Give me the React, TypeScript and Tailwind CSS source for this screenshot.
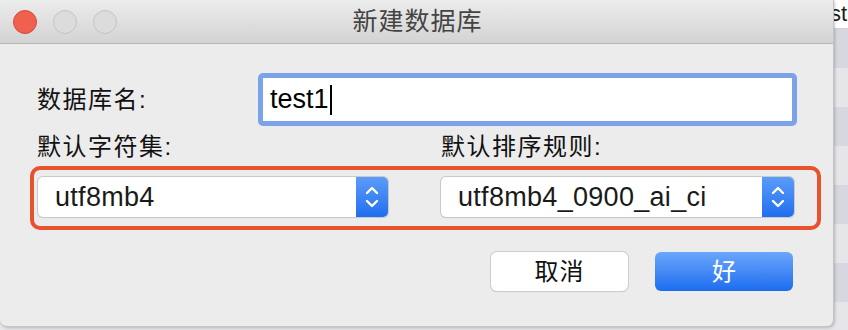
import React from 'react';

const font = { fontFamily: '"Liberation Sans", "Noto Sans CJK SC", sans-serif' };

const Stepper = () => (
  <div className="w-[32px] h-full rounded-r-[5px] bg-gradient-to-b from-[#5b9bf9] to-[#1f6ef0] flex items-center justify-center">
    <svg width="16" height="26" viewBox="0 0 16 26" fill="none" stroke="white" strokeWidth="2.4" strokeLinecap="round" strokeLinejoin="round">
      <path d="M3 9 L8 4 L13 9" />
      <path d="M3 17 L8 22 L13 17" />
    </svg>
  </div>
);

const Select = ({ value, width }: { value: string; width: string }) => (
  <div className={`${width} h-[40px] flex bg-white rounded-[5px] shadow-[0_0_0_1px_#c9c9c9,0_1px_1px_rgba(0,0,0,0.15)]`}>
    <div className="flex-1 flex items-center pl-[17px] text-[27px] text-[#1a1a1a] tracking-[0.3px] leading-none">{value}</div>
    <Stepper />
  </div>
);

export default function App() {
  const rows = Array.from({ length: 8 });
  return (
    <div className="w-[848px] h-[330px] flex bg-[#e6e6ea] overflow-hidden" style={font}>
      {/* dialog */}
      <div className="w-[834px] h-[327px] flex flex-col bg-[#ececec] rounded-b-[7px] border-r border-b border-[#c4c4c4] shadow-[1px_1px_3px_rgba(0,0,0,0.2)] relative z-10">
        <div className="h-[44px] shrink-0 relative flex items-center bg-gradient-to-b from-[#ececec] to-[#d3d3d3] border-b border-[#b8b8b8]">
          <div className="flex items-center gap-[16px] pl-[13px]">
            <div className="w-[24px] h-[24px] rounded-full bg-[#f0604f] border border-[#d9493b]" />
            <div className="w-[24px] h-[24px] rounded-full border border-[#c4c4c4] bg-[#dcdcdc]" />
            <div className="w-[24px] h-[24px] rounded-full border border-[#c4c4c4] bg-[#dcdcdc]" />
          </div>
          <div className="absolute inset-0 flex items-center justify-center text-[25px] tracking-[1px] text-[#444] pl-[2px]">新建数据库</div>
        </div>

        <div className="flex-1 flex flex-col pt-[29px]">
          <div className="flex items-center pl-[37px]">
            <div className="w-[221px] text-[24px] text-[#111] tracking-[1.5px]">数据库名:</div>
            <div className="w-[539px] h-[53px] rounded-[5px] bg-[#7aa3ea] p-[5px]">
              <div className="h-full bg-white flex items-center pl-[7px] text-[27px] text-black leading-none">
                test1<span className="inline-block w-[2px] h-[30px] bg-black ml-[1px]" />
              </div>
            </div>
          </div>

          <div className="flex pl-[37px] mt-[6px] text-[24px] text-[#111] tracking-[1.5px] leading-[30px]">
            <div className="w-[404px]">默认字符集:</div>
            <div>默认排序规则:</div>
          </div>

          <div className="ml-[30px] w-[791px] h-[64px] mt-[4px] border-[4px] border-[#e8522c] rounded-[10px] flex items-center pl-[4px] pb-[2px]">
            <Select value="utf8mb4" width="w-[350px]" />
            <div className="w-[53px]" />
            <Select value="utf8mb4_0900_ai_ci" width="w-[353px]" />
          </div>

          <div className="flex justify-end gap-[27px] pr-[40px] mt-[22px]">
            <div className="w-[137px] h-[39px] rounded-[6px] bg-white shadow-[0_0_0_1px_#cdcdcd,0_1px_1px_rgba(0,0,0,0.2)] flex items-center justify-center text-[24px] text-[#111] tracking-[1px]">取消</div>
            <div className="w-[138px] h-[39px] rounded-[6px] bg-gradient-to-b from-[#6aa6fa] to-[#1a6cf0] flex items-center justify-center text-[24px] text-white">好</div>
          </div>
        </div>
      </div>

      {/* window behind */}
      <div className="flex-1 flex flex-col">
        <div className="h-[33px] bg-white text-[22px] text-[#1c1c1c] leading-[28px] -ml-[4px] border-b border-[#d0d0d6]">st</div>
        {rows.map((_, i) => (
          <div key={i} className={i % 2 === 0 ? 'h-[39px] shrink-0 bg-[#d6d7df]' : 'h-[39px] shrink-0 bg-[#e6e6ea]'} />
        ))}
      </div>
    </div>
  );
}
